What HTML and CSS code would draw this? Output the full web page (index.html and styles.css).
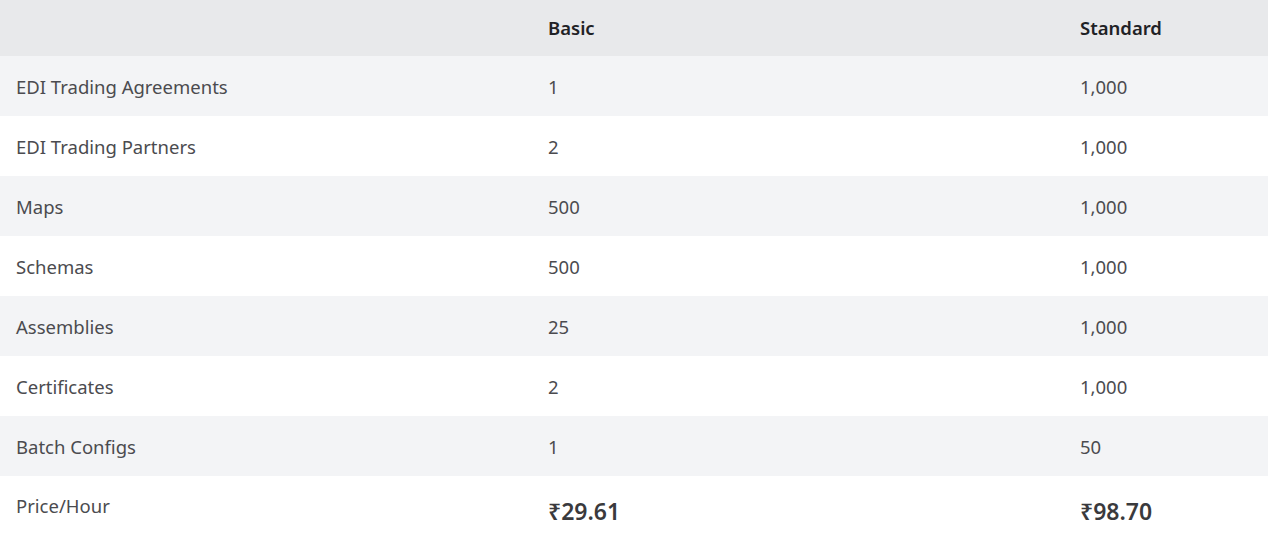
FILE: index.html
```html
<!DOCTYPE html>
<html lang="en">
<head>
<meta charset="utf-8">
<title>Pricing</title>
<link rel="stylesheet" href="styles.css">
</head>
<body>
<table class="pricing">
  <colgroup>
    <col class="c1">
    <col class="c2">
    <col class="c3">
  </colgroup>
  <thead>
    <tr><th></th><th>Basic</th><th>Standard</th></tr>
  </thead>
  <tbody>
    <tr><td>EDI Trading Agreements</td><td>1</td><td>1,000</td></tr>
    <tr><td>EDI Trading Partners</td><td>2</td><td>1,000</td></tr>
    <tr><td>Maps</td><td>500</td><td>1,000</td></tr>
    <tr><td>Schemas</td><td>500</td><td>1,000</td></tr>
    <tr><td>Assemblies</td><td>25</td><td>1,000</td></tr>
    <tr><td>Certificates</td><td>2</td><td>1,000</td></tr>
    <tr><td>Batch Configs</td><td>1</td><td>50</td></tr>
    <tr class="price-row"><td>Price/Hour</td><td><span class="price">₹29.61</span></td><td><span class="price">₹98.70</span></td></tr>
  </tbody>
</table>
</body>
</html>
```
FILE: styles.css
```css
html, body {
  margin: 0;
  padding: 0;
  background: #ffffff;
  overflow: hidden;
}
body {
  font-family: "Noto Sans", "Open Sans", sans-serif;
  font-size: 18.5px;
  color: #4b4b4f;
}
.pricing {
  border-collapse: collapse;
  table-layout: fixed;
  width: 100%;
}
.c1, .c2 { width: 532px; }
.pricing th {
  background: #e8e9eb;
  color: #1f2226;
  font-weight: 600;
  text-align: left;
  padding: 16px 16px;
  line-height: 24px;
  height: 24px;
  white-space: nowrap;
}
.pricing td {
  padding: 18px 16px 16px;
  line-height: 26px;
  vertical-align: top;
  text-align: left;
  white-space: nowrap;
}
.pricing tbody tr:nth-child(odd) td { background: #f3f4f6; }
.pricing tbody tr.price-row td { background: #ffffff; }
.price-row td { padding-top: 17px; }
.price {
  display: block;
  font-size: 23px;
  line-height: 36px;
  font-weight: 600;
  color: #3a3a3d;
}
```
